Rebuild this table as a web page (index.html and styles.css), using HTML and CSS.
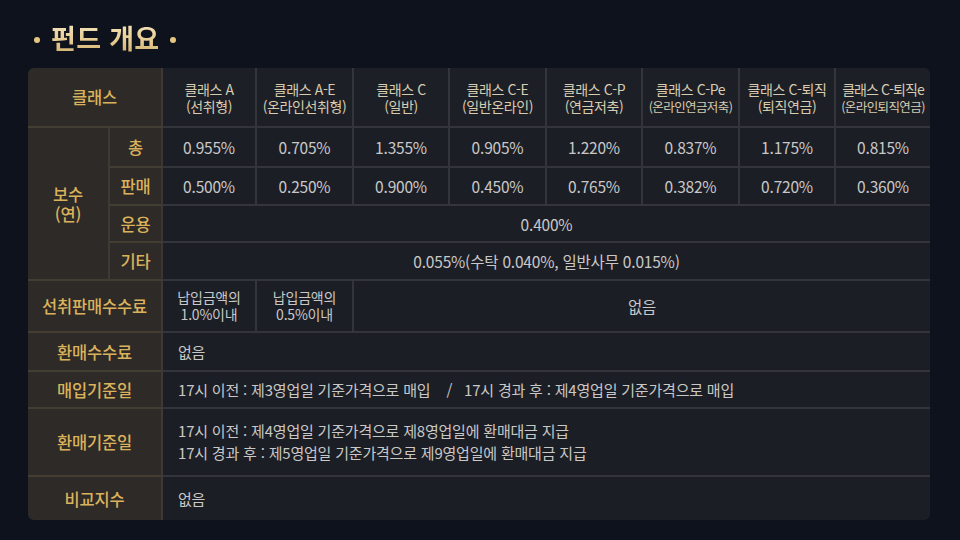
FILE: index.html
```html
<!DOCTYPE html>
<html lang="ko">
<head>
<meta charset="utf-8">
<link rel="stylesheet" href="styles.css">
</head>
<body>
<div class="page">
  <h1 class="title"><span class="dot"></span><span class="title-text">펀드 개요</span><span class="dot"></span></h1>
  <div class="wrap">
    <table class="grid">
      <colgroup>
        <col class="c-l1"><col class="c-l2">
        <col class="c94"><col class="c97"><col class="c96"><col class="c97">
        <col class="c96"><col class="c97"><col class="c96"><col class="c94">
      </colgroup>
      <tr class="r-head">
        <th class="lab" colspan="2">클래스</th>
        <th class="hd">클래스 A<br>(선취형)</th>
        <th class="hd">클래스 A-E<br>(온라인선취형)</th>
        <th class="hd">클래스 C<br>(일반)</th>
        <th class="hd">클래스 C-E<br>(일반온라인)</th>
        <th class="hd">클래스 C-P<br>(연금저축)</th>
        <th class="hd">클래스 C-Pe<br><span class="sm">(온라인연금저축)</span></th>
        <th class="hd">클래스 C-퇴직<br>(퇴직연금)</th>
        <th class="hd tight">클래스 C-퇴직e<br><span class="sm">(온라인퇴직연금)</span></th>
      </tr>
      <tr class="r-total">
        <th class="lab" rowspan="4">보수<br>(연)</th>
        <th class="lab sub">총</th>
        <td>0.955%</td><td>0.705%</td><td>1.355%</td><td>0.905%</td>
        <td>1.220%</td><td>0.837%</td><td>1.175%</td><td>0.815%</td>
      </tr>
      <tr class="r-sale">
        <th class="lab sub">판매</th>
        <td>0.500%</td><td>0.250%</td><td>0.900%</td><td>0.450%</td>
        <td>0.765%</td><td>0.382%</td><td>0.720%</td><td>0.360%</td>
      </tr>
      <tr class="r-mgmt">
        <th class="lab sub">운용</th>
        <td colspan="8">0.400%</td>
      </tr>
      <tr class="r-etc">
        <th class="lab sub">기타</th>
        <td colspan="8">0.055%(수탁 0.040%, 일반사무 0.015%)</td>
      </tr>
      <tr class="r-front">
        <th class="lab" colspan="2">선취판매수수료</th>
        <td class="two">납입금액의<br>1.0%이내</td>
        <td class="two">납입금액의<br>0.5%이내</td>
        <td colspan="6">없음</td>
      </tr>
      <tr class="r-red">
        <th class="lab" colspan="2">환매수수료</th>
        <td class="left" colspan="8">없음</td>
      </tr>
      <tr class="r-buy">
        <th class="lab" colspan="2">매입기준일</th>
        <td class="left" colspan="8">17시 이전 : 제3영업일 기준가격으로 매입&nbsp;&nbsp;&nbsp; /&nbsp;&nbsp; 17시 경과 후 : 제4영업일 기준가격으로 매입</td>
      </tr>
      <tr class="r-redday">
        <th class="lab" colspan="2">환매기준일</th>
        <td class="left lines" colspan="8">17시 이전 : 제4영업일 기준가격으로 제8영업일에 환매대금 지급<br>17시 경과 후 : 제5영업일 기준가격으로 제9영업일에 환매대금 지급</td>
      </tr>
      <tr class="r-idx">
        <th class="lab" colspan="2">비교지수</th>
        <td class="left" colspan="8">없음</td>
      </tr>
    </table>
  </div>
</div>
</body>
</html>
```

FILE: styles.css
```css
* { box-sizing: border-box; }
html, body {
  margin: 0;
  padding: 0;
  background: #0e121c;
}
body {
  width: 960px;
  height: 540px;
  overflow: hidden;
  font-family: "Noto Sans CJK KR", "Noto Sans", sans-serif;
}
.page {
  padding: 20px 30px 0 28px;
}
.title {
  margin: 0 0 12px 6px;
  height: 36px;
  display: flex;
  align-items: center;
  gap: 11px;
  font-size: 27px;
  font-weight: 700;
  line-height: 36px;
}
.title-text {
  background: linear-gradient(180deg, #f6e7c4 0%, #e7cc93 55%, #cfae6c 100%);
  -webkit-background-clip: text;
  background-clip: text;
  color: transparent;
  letter-spacing: 0.3px;
}
.dot {
  width: 6px;
  height: 6px;
  border-radius: 50%;
  background: #e4c583;
  margin-top: 3px;
}
.wrap {
  width: 902px;
  border-radius: 6px;
  overflow: hidden;
  background: #1c1e26;
}
.grid {
  width: 902px;
  border-collapse: separate;
  border-spacing: 0;
  table-layout: fixed;
}
.c-l1 { width: 82px; }
.c-l2 { width: 53px; }
.c94 { width: 94px; }
.c96 { width: 96px; }
.c97 { width: 97px; }

th, td {
  padding: 0;
  text-align: center;
  vertical-align: middle;
  border-right: 2px solid #34353b;
  border-bottom: 2px solid #34353b;
  font-weight: 400;
}
tr > :last-child { border-right: none; }
tr:last-child > * { border-bottom: none; }

.lab {
  background: #2d2a27;
  color: #dbb25c;
  font-size: 16.5px;
  font-weight: 500;
  line-height: 20px;
  letter-spacing: -0.2px;
  border-right-color: #3e3a33;
  border-bottom-color: #443d31;
}
.lab.sub {
  border-right-color: #3a3630;
}
.hd {
  background: #1d1f27;
  color: #d7cbb0;
  font-size: 14px;
  line-height: 17px;
  letter-spacing: -0.4px;
  padding-top: 1px;
}
.hd .sm {
  font-size: 12.5px;
  letter-spacing: -0.6px;
}
.hd.tight { letter-spacing: -0.9px; }

td {
  color: #c9c8c6;
  font-size: 15.5px;
  line-height: 20px;
  letter-spacing: -0.2px;
}
td.two {
  font-size: 14px;
  line-height: 17px;
}
td.left {
  text-align: left;
  padding-left: 15px;
  font-size: 15px;
}
td.lines { line-height: 22px; }

.r-head > * { height: 60px; }
.r-total > * { height: 40px; }
.r-sale > * { height: 38px; }
.r-mgmt > * { height: 37px; }
.r-etc > * { height: 38px; }
.r-front > * { height: 52px; }
.r-red > * { height: 39px; }
.r-buy > * { height: 37px; }
.r-redday > * { height: 68px; }
.r-idx > * { height: 43px; }
.r-total > .lab[rowspan] { height: auto; }
```
